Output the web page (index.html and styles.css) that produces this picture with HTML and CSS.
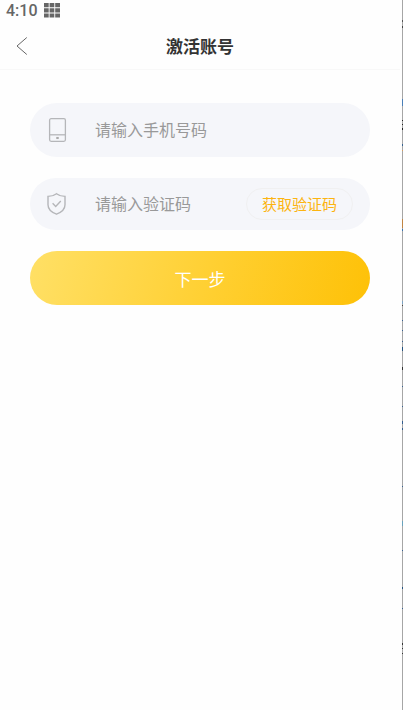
FILE: index.html
```html
<!DOCTYPE html>
<html lang="zh-CN">
<head>
<meta charset="utf-8">
<meta name="viewport" content="width=device-width, initial-scale=1">
<title>激活账号</title>
<link rel="stylesheet" href="styles.css">
</head>
<body>
<div class="screen">
  <div class="status">
    <span>4:10</span>
    <svg width="16" height="15" viewBox="0 0 16 15" fill="#666" aria-hidden="true">
      <path d="M0 0h4.700v4.300H0zM5.600 0h4.700v4.300H5.600zM11.200 0H16v4.300h-4.800zM0 5.300h4.700v4.300H0zM5.600 5.300h4.700v4.300H5.600zM11.200 5.300H16v4.300h-4.800zM0 10.600h4.700v4H0zM5.600 10.600h4.700v4H5.600zM11.200 10.600H16v4h-4.800z"/>
    </svg>
  </div>
  <header class="header">
    <button class="back" type="button" aria-label="返回">
      <svg width="12" height="18" viewBox="0 0 12 18" fill="none" stroke="#666" aria-hidden="true">
        <path d="M10.800 .5 1 9l9.800 8.500"/>
      </svg>
    </button>
    <h1 class="title">激活账号</h1>
  </header>
  <form class="form">
    <div class="field">
      <label class="field-icon" for="phone" aria-label="手机号码">
        <svg width="20" height="24" viewBox="0 0 20 24" fill="none" stroke="#b5b6b9" stroke-width="1.300" aria-hidden="true">
          <rect x="2.600" y=".7" width="15.800" height="22.600" rx="1.500"/>
          <path d="M2.600 16.800h15.800"/>
          <rect x="9.700" y="19.300" width="1.600" height="1.400" fill="#aaa" stroke="#aaa" stroke-width=".7"/>
        </svg>
      </label>
      <input class="input" id="phone" type="tel" placeholder="请输入手机号码">
    </div>
    <div class="field field-code">
      <label class="field-icon" for="code" aria-label="验证码">
        <svg width="20" height="24" viewBox="0 0 20 24" fill="none" stroke="#b5b6b9" stroke-width="1.400" aria-hidden="true">
          <path d="M9.500 1.700C7 3.600 4.200 4.400 1 4.400v8.400c0 4.200 3.700 7.600 8.500 9.400 4.800-1.800 8.500-5.200 8.500-9.400V4.400c-3.300 0-6-.8-8.500-2.700z"/>
          <path d="m5.600 11.300 3.100 3.100 5.100-5.400"/>
        </svg>
      </label>
      <input class="input" id="code" type="text" placeholder="请输入验证码">
      <button class="get-code" type="button">获取验证码</button>
    </div>
    <button class="next" type="submit">下一步</button>
  </form>
</div>
</body>
</html>
```
FILE: styles.css
```css
* {
  box-sizing: border-box;
}

body {
  margin: 0;
  background: #fefefe;
  font-family: "Noto Sans CJK SC", sans-serif;
}

button,
input {
  padding: 0;
  border: 0;
  background: none;
  font-family: inherit;
}

.screen {
  position: relative;
  min-height: 100vh;
  padding-right: 3px;
}

/* Window edge, with slivers of the content behind it */
.screen::after {
  content: "";
  position: absolute;
  top: 0;
  right: 0;
  bottom: 0;
  width: 1px;
  background:
    linear-gradient(#555, #555) 0 20px / 1px 2px no-repeat,
    linear-gradient(#444, #444) 0 26px / 1px 2px no-repeat,
    linear-gradient(#4a7fb8, #4a7fb8) 0 99px / 1px 7px no-repeat,
    linear-gradient(#222, #222) 0 120px / 1px 1px no-repeat,
    linear-gradient(#222, #222) 0 124px / 1px 1px no-repeat,
    linear-gradient(#222, #222) 0 128px / 1px 2px no-repeat,
    linear-gradient(#356291, #356291) 0 144px / 1px 2px no-repeat,
    linear-gradient(#d89c5d, #d89c5d) 0 150px / 1px 1px no-repeat,
    linear-gradient(#c18543, #c18543) 0 219px / 1px 9px no-repeat,
    linear-gradient(#3974b0, #3974b0) 0 229px / 1px 2px no-repeat,
    linear-gradient(#7da3c2, #7da3c2) 0 301px / 1px 3px no-repeat,
    linear-gradient(#444, #444) 0 305px / 1px 1px no-repeat,
    linear-gradient(#355f90, #355f90) 0 320px / 1px 1px no-repeat,
    linear-gradient(#355f90, #355f90) 0 330px / 1px 1px no-repeat,
    linear-gradient(#355f90, #355f90) 0 341px / 1px 1px no-repeat,
    linear-gradient(#24527f, #24527f) 0 347px / 1px 4px no-repeat,
    linear-gradient(#333, #333) 0 367px / 1px 3px no-repeat,
    linear-gradient(#355f90, #355f90) 0 386px / 1px 1px no-repeat,
    linear-gradient(#355f90, #355f90) 0 406px / 1px 1px no-repeat,
    linear-gradient(#355f90, #355f90) 0 421px / 1px 3px no-repeat,
    linear-gradient(#355f90, #355f90) 0 428px / 1px 2px no-repeat,
    linear-gradient(#355f90, #355f90) 0 486px / 1px 1px no-repeat,
    linear-gradient(#69a3bd, #69a3bd) 0 521px / 1px 5px no-repeat,
    linear-gradient(#355f90, #355f90) 0 550px / 1px 1px no-repeat,
    linear-gradient(#24527f, #24527f) 0 587px / 1px 2px no-repeat,
    linear-gradient(#355f90, #355f90) 0 608px / 1px 1px no-repeat,
    linear-gradient(#333, #333) 0 643px / 1px 2px no-repeat,
    linear-gradient(#333, #333) 0 648px / 1px 1px no-repeat,
    linear-gradient(#333, #333) 0 653px / 1px 1px no-repeat,
    #a6a6a6;
}

.status {
  display: flex;
  align-items: center;
  gap: 6px;
  height: 21px;
  padding-left: 6px;
  color: #666;
  font: 500 16px/21px Roboto, sans-serif;
}

.header {
  display: grid;
  grid-template-columns: 44px 1fr 44px;
  align-items: center;
  height: 49px;
  padding-top: 2px;
  border-bottom: 1px solid #f8f8f8;
}

.back {
  display: flex;
  align-items: center;
  height: 44px;
  padding-left: 16px;
}

.title {
  margin: 0;
  color: #333;
  font-size: 17px;
  font-weight: 700;
  line-height: 24px;
  text-align: center;
}

.form {
  display: flex;
  flex-direction: column;
  padding: 33px 30px;
}

.field {
  display: flex;
  align-items: center;
  height: 54px;
  margin-bottom: 21px;
  padding: 0 17px;
  border-radius: 27px;
  background: #f5f6fa;
}

.field-code {
  height: 52px;
}

.field-icon {
  display: flex;
  margin-right: 28px;
}

.input {
  flex: 1;
  min-width: 0;
  height: 32px;
  padding-bottom: 2px;
  outline: none;
  color: #333;
  font-size: 16px;
}

.input::placeholder {
  color: #999;
  opacity: 1;
}

.get-code {
  width: 107px;
  height: 32px;
  padding-bottom: 2px;
  border: 1px solid #f0f0f1;
  border-radius: 16px;
  color: #fcb410;
  font-size: 15px;
}

.next {
  height: 54px;
  border-radius: 27px;
  background: linear-gradient(105deg, #ffe066, #ffcf30 55%, #fec107);
  color: #fff;
  font-size: 17px;
}
```
